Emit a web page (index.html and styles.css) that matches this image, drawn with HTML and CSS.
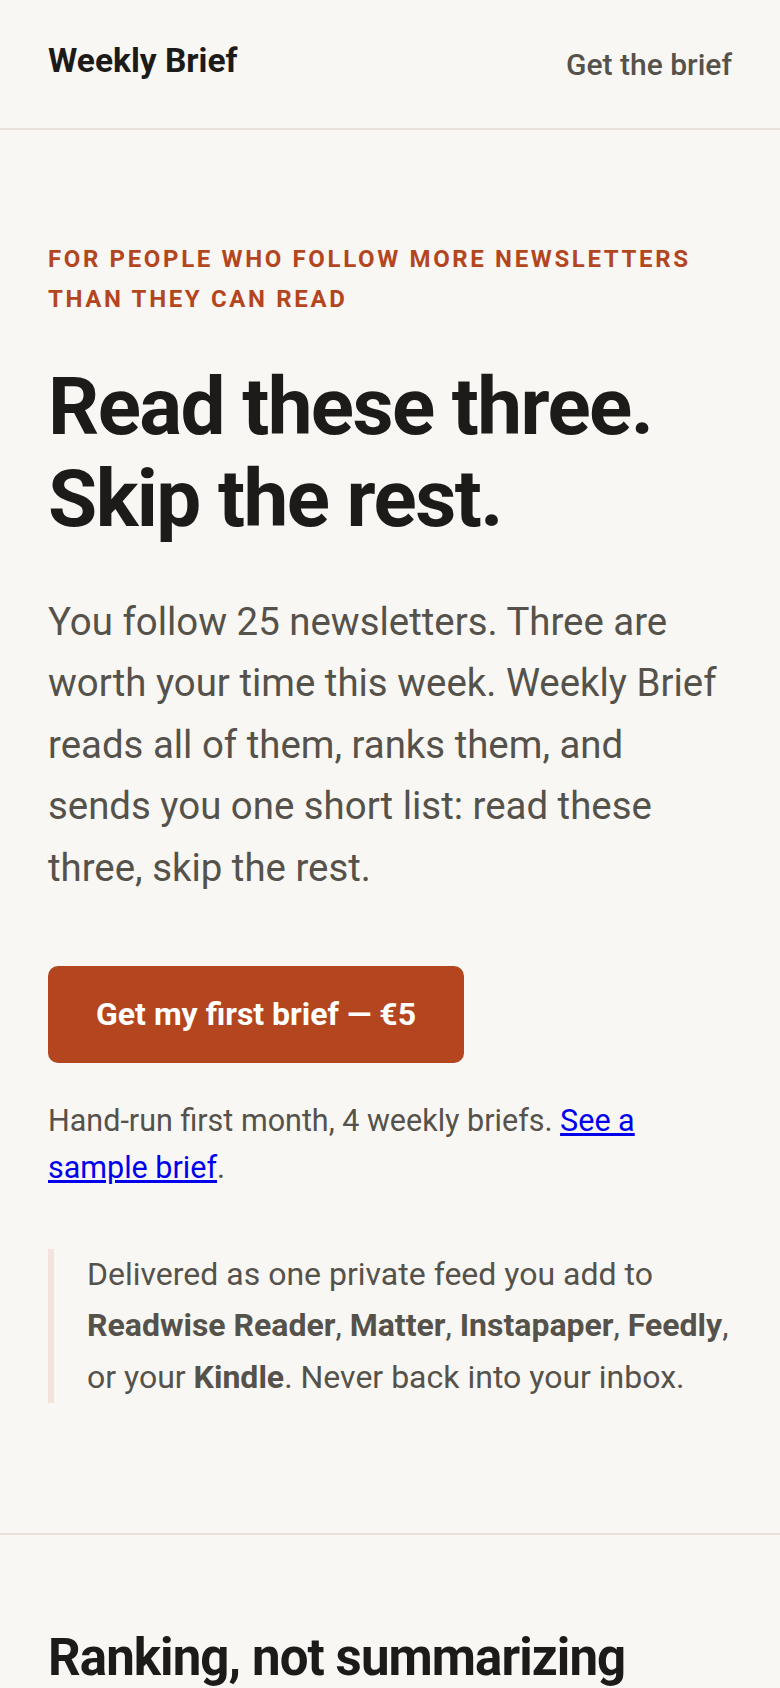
FILE: index.html
```html
<!DOCTYPE html>
<html lang="en">
<head>
<meta charset="utf-8">
<meta name="viewport" content="width=device-width, initial-scale=1">
<title>Weekly Brief</title>
<link rel="stylesheet" href="styles.css">
</head>
<body>
<header class="site-header">
  <a class="brand" href="#">Weekly Brief</a>
  <a class="nav-link" href="#">Get the brief</a>
</header>
<main>
  <section class="hero">
    <p class="eyebrow">For people who follow more newsletters than they can read</p>
    <h1 class="hero-title">Read these three.<br>Skip the rest.</h1>
    <p class="lede">You follow 25 newsletters. Three are worth your time this week. Weekly Brief reads all of them, ranks them, and sends you one short list: read these three, skip the rest.</p>
    <a class="cta" href="#">Get my first brief — €5</a>
    <p class="fine">Hand-run first month, 4 weekly briefs. <a href="#" class="sample-link">See a sample brief</a>.</p>
    <blockquote class="delivery">Delivered as one private feed you add to <strong>Readwise Reader</strong>, <strong>Matter</strong>, <strong>Instapaper</strong>, <strong>Feedly</strong>, or your <strong>Kindle</strong>. Never back into your inbox.</blockquote>
  </section>
  <section class="section">
    <h2 class="section-title">Ranking, not summarizing</h2>
  </section>
</main>
</body>
</html>
```
FILE: styles.css
```css
* { box-sizing: border-box; }

html, body {
  margin: 0;
  padding: 0;
  background: #f9f7f3;
}

body {
  font-family: Roboto, "Liberation Sans", Arial, sans-serif;
  color: #55524b;
}

.site-header {
  height: 130px;
  padding: 0 48px;
  display: flex;
  align-items: center;
  justify-content: space-between;
  border-bottom: 2px solid #e8e1d9;
}

.brand {
  font-size: 33.5px;
  font-weight: 700;
  color: #1c1b19;
  text-decoration: none;
  margin-bottom: 8px;
}

.nav-link {
  font-size: 30px;
  font-weight: 500;
  color: #55524b;
  text-decoration: none;
}

.hero {
  padding: 109px 48px 130px;
  border-bottom: 2px solid #e8e1d9;
}

.eyebrow {
  margin: 0;
  font-size: 24px;
  line-height: 40px;
  font-weight: 700;
  letter-spacing: 0.11em;
  text-transform: uppercase;
  color: #b3461f;
}

.hero-title {
  margin: 42px 0 0;
  font-size: 80px;
  line-height: 92px;
  font-weight: 700;
  letter-spacing: -0.02em;
  color: #1c1b19;
}

.lede {
  margin: 46px 0 0;
  font-size: 38.4px;
  line-height: 61.44px;
  max-width: 672px;
}

.cta {
  display: inline-block;
  margin-top: 68px;
  padding: 26px 48px;
  font-size: 32px;
  line-height: 45px;
  font-weight: 700;
  color: #ffffff;
  background: #b3461f;
  border-radius: 10px;
  text-decoration: none;
}

.fine {
  margin: 34px 0 0;
  font-size: 30.5px;
  line-height: 47px;
  max-width: 672px;
}

.sample-link {
  color: #0000ee;
  text-decoration: underline;
}

.delivery {
  margin: 58px 0 0;
  padding: 0 0 0 33px;
  border-left: 6px solid #f3e3dc;
  font-size: 32px;
  line-height: 51.2px;
}

.delivery strong {
  font-weight: 700;
}

.section {
  padding: 94px 48px 80px;
}

.section-title {
  margin: 0;
  font-size: 51px;
  line-height: 58px;
  font-weight: 700;
  letter-spacing: -0.018em;
  color: #1c1b19;
}
```
